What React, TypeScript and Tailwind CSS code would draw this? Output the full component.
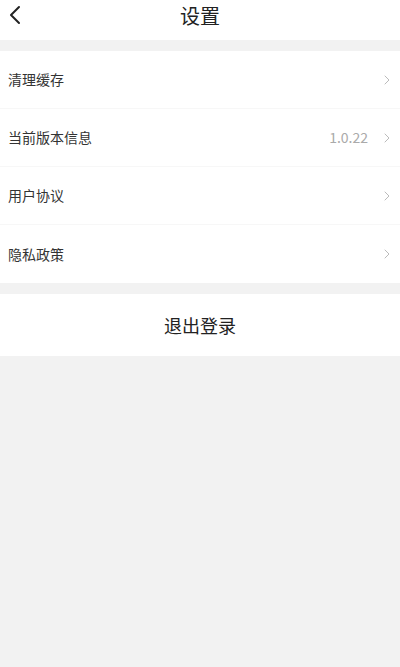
import { ChevronRight } from "lucide-react"

const rows = [
  { label: "清理缓存" },
  { label: "当前版本信息", value: "1.0.22" },
  { label: "用户协议" },
  { label: "隐私政策" },
]

export default function App() {
  return (
    <div
      className="min-h-[667px] bg-[#f2f2f2] text-[#333]"
      style={{ fontFamily: '"Noto Sans CJK SC", "Noto Sans", sans-serif' }}
    >
      {/* header */}
      <div className="relative flex h-[40px] justify-center bg-white pt-[4px]">
        <svg
          className="absolute left-[9px] top-[5px]"
          width="12"
          height="20"
          viewBox="0 0 12 20"
          fill="none"
          stroke="#222"
          strokeWidth="2"
          strokeLinecap="round"
          strokeLinejoin="round"
        >
          <path d="M10 2 L2 10 L10 18" />
        </svg>
        <span className="text-[20px] leading-[24px] text-[#222]">设置</span>
      </div>

      <div className="mt-[11px] bg-white">
        {rows.map((row, i) => (
          <div
            key={row.label}
            className={`flex h-[58px] items-center pl-[8px] pr-[5px] ${
              i < rows.length - 1 ? "border-b border-[#f7f7f7]" : ""
            }`}
          >
            <span className="flex-1 text-[14px]">{row.label}</span>
            {row.value && (
              <span className="mr-[11px] text-[14px] text-[#aaa]">{row.value}</span>
            )}
            <ChevronRight className="h-4 w-4 text-[#bbb]" strokeWidth={1.5} />
          </div>
        ))}
      </div>

      <div className="mt-[11px] flex h-[62px] items-center justify-center bg-white">
        <span className="text-[18px] text-[#222]">退出登录</span>
      </div>
    </div>
  )
}
